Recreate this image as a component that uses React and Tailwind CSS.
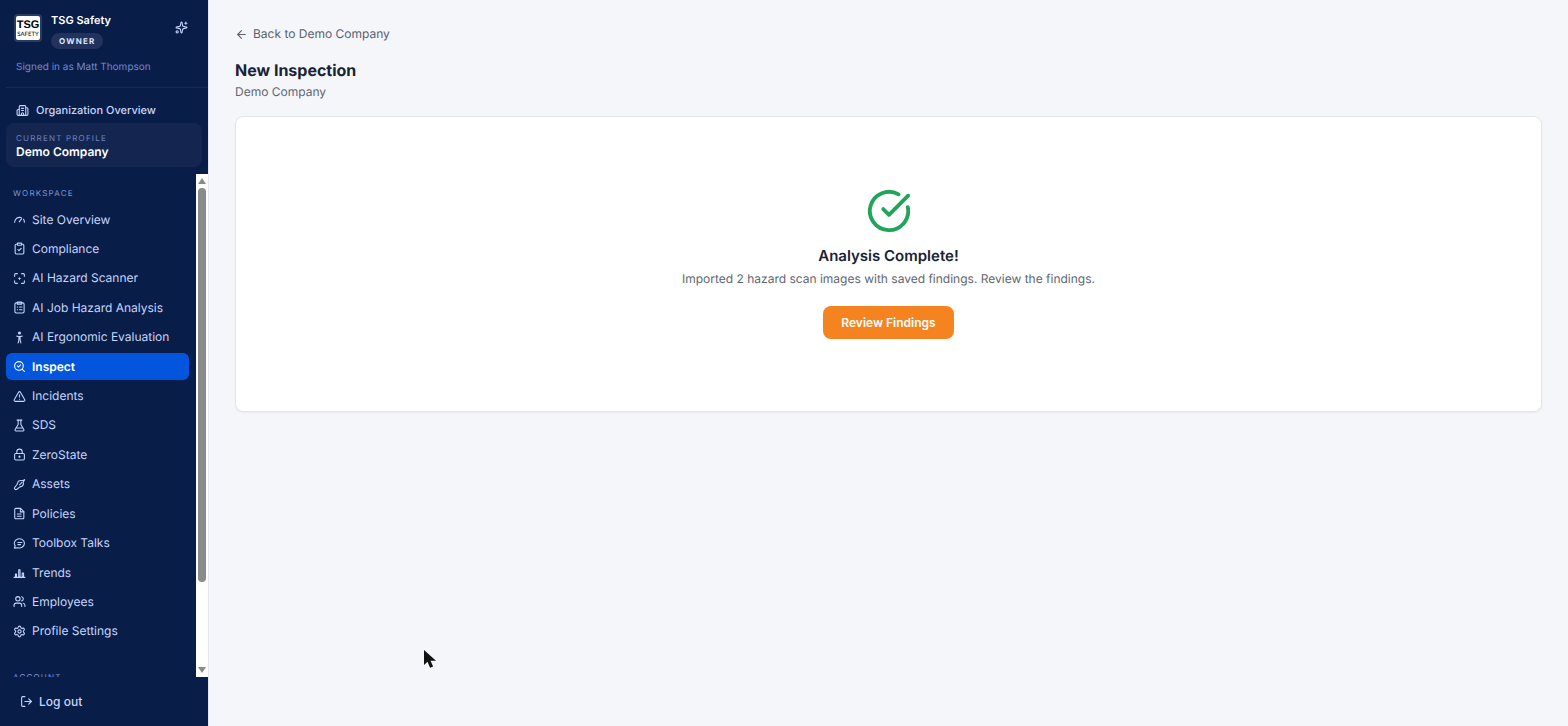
import {
  ArrowLeft,
  Building2,
  CircleCheckBig,
  ClipboardCheck,
  LockKeyhole,
  LogOut,
  SearchCheck,
  Settings,
  Sparkles,
  TriangleAlert,
  Users,
} from "lucide-react";

const Icon = ({ children }) => (
  <svg
    viewBox="0 0 24 24"
    fill="none"
    stroke="currentColor"
    strokeWidth="2"
    strokeLinecap="round"
    strokeLinejoin="round"
    className="size-[13px] shrink-0"
    aria-hidden="true"
  >
    {children}
  </svg>
);

const GaugeIcon = () => (
  <Icon>
    <path d="M3 17a9.2 9.2 0 0 1 12-8.5" />
    <path d="M19.5 11.5a9.2 9.2 0 0 1 1.5 5.5" />
    <path d="m11.5 16.5 4.5-6" />
  </Icon>
);

const ScanIcon = () => (
  <Icon>
    <path d="M3 8V5a2 2 0 0 1 2-2h3" />
    <path d="M16 3h3a2 2 0 0 1 2 2v3" />
    <path d="M21 16v3a2 2 0 0 1-2 2h-3" />
    <path d="M8 21H5a2 2 0 0 1-2-2v-3" />
    <path d="M12 10.5v3M10.5 12h3" />
  </Icon>
);

const ChecklistIcon = () => (
  <Icon>
    <rect x="3.5" y="3.5" width="17" height="18.5" rx="2.5" />
    <path d="M8 2h8v4H8z" />
    <path d="M8 11h.5M12 11h4.5M8 16h.5M12 16h4.5" />
  </Icon>
);

const PersonIcon = () => (
  <Icon>
    <circle cx="12" cy="3.8" r="1.8" fill="currentColor" />
    <path d="m7 9.5 3.5.8h3l3.5-.8" />
    <path d="M11 10.5v5L9.5 22M13 10.5v5l1.500 6.500" />
  </Icon>
);

const FlaskIcon = () => (
  <Icon>
    <path d="M7.5 2h9" />
    <path d="M9.5 2v8L4 19.5A1.7 1.7 0 0 0 5.5 22h13a1.7 1.7 0 0 0 1.5-2.5L14.5 10V2" />
    <path d="M7 16.5h10" />
  </Icon>
);

const WrenchIcon = () => (
  <Icon>
    <path d="m21.5 3-4.500 2.200c-3.200-1.200-7.500 0-8.300 3.300-.3 1.200-.5 2.500-1.400 3.500L3.500 17a2.600 2.600 0 0 0 3.700 3.700l5-3.800c1-.8 2.300-.9 3.400-1.400 3-1.400 4.300-4.500 3.200-7.500Z" />
    <path d="m12 12.5 4.5-4.5" />
  </Icon>
);

const PageIcon = () => (
  <Icon>
    <path d="M5 2.5h9l6 6V20a1.8 1.8 0 0 1-1.8 1.8H5A1.8 1.8 0 0 1 3.200 20V4.300A1.800 1.800 0 0 1 5 2.500Z" />
    <path d="M13.5 3v6H20" />
    <path d="M8 13h7M8 17h7" />
  </Icon>
);

const TalkIcon = () => (
  <Icon>
    <path d="M2.5 20.5 4 16.5a9.4 8.5 0 1 1 5 3.3Z" />
    <path d="M9 10h7.5M9 14h5" />
  </Icon>
);

const BarsIcon = () => (
  <Icon>
    <path d="M2 21h20" />
    <path d="M4.5 15h2v5h-2zM10.500 7h2.500v13h-2.500zM17 13h2.500v7H17z" />
  </Icon>
);

const links = [
  { label: "Site Overview", icon: GaugeIcon },
  { label: "Compliance", icon: ClipboardCheck },
  { label: "AI Hazard Scanner", icon: ScanIcon },
  { label: "AI Job Hazard Analysis", icon: ChecklistIcon },
  { label: "AI Ergonomic Evaluation", icon: PersonIcon },
  { label: "Inspect", icon: SearchCheck, active: true },
  { label: "Incidents", icon: TriangleAlert },
  { label: "SDS", icon: FlaskIcon },
  { label: "ZeroState", icon: LockKeyhole },
  { label: "Assets", icon: WrenchIcon },
  { label: "Policies", icon: PageIcon },
  { label: "Toolbox Talks", icon: TalkIcon },
  { label: "Trends", icon: BarsIcon },
  { label: "Employees", icon: Users },
  { label: "Profile Settings", icon: Settings },
];

const Scrollbar = () => (
  <div className="flex w-3 shrink-0 flex-col items-center bg-white py-1" aria-hidden="true">
    <svg viewBox="0 0 8 6" className="h-[6px] w-2 shrink-0">
      <path d="M4 0 8 6H0Z" fill="#8b8b8b" />
    </svg>
    <div className="flex w-2 flex-1 flex-col py-1">
      <div className="h-[83%] w-2 rounded-full bg-[#8b8b8b]" />
    </div>
    <svg viewBox="0 0 8 6" className="h-[6px] w-2 shrink-0">
      <path d="M0 0h8L4 6Z" fill="#8b8b8b" />
    </svg>
  </div>
);

const Sidebar = () => (
  <aside className="flex w-52 shrink-0 flex-col bg-[#091d49] text-[#c6d5fa]">
    <div className="ml-[6px] border-b border-[#172a58] pt-3 pr-5 pb-3 pl-2">
      <div className="flex items-start">
        <div className="mt-[2px] flex size-7 flex-col items-center justify-center rounded-sm border-2 border-[#2b3a5f] bg-white text-black">
          <span className="font-['Liberation_Sans',sans-serif] text-[11px] leading-[12px] font-bold">TSG</span>
          <span className="font-['Lato',sans-serif] text-[6px] leading-[7px]">SAFETY</span>
        </div>
        <div className="ml-[9px] flex-1">
          <p className="text-[11px] leading-4 font-semibold text-white">TSG Safety</p>
          <span className="mt-[5px] flex h-4 w-fit items-center rounded-full bg-[#22325c] px-2 text-[8px] font-bold tracking-[0.15em] text-[#dbe6ff]">
            OWNER
          </span>
        </div>
        <button type="button" aria-label="Assistant" className="mt-[9px]">
          <Sparkles className="size-[13px]" />
        </button>
      </div>
      <p className="mt-[10px] ml-[2px] text-[10px] leading-4 text-[#7089cd]">
        Signed in as Matt Thompson
      </p>
    </div>

    <a href="#" className="mt-[10px] flex h-6 items-center gap-[7px] pl-4 text-[11px] font-medium">
      <Building2 className="size-[13px]" />
      Organization Overview
    </a>
    <div className="mx-[6px] mt-px rounded-lg bg-[#14264f] px-[10px] pt-[9px] pb-[7px]">
      <p className="text-[8px] leading-3 tracking-[0.15em] text-[#6c83c2]">CURRENT PROFILE</p>
      <p className="text-[12px] leading-4 font-semibold text-white">Demo Company</p>
    </div>

    <div className="mt-[7px] flex min-h-0 flex-1">
      <nav className="min-w-0 flex-1 overflow-hidden pl-[6px]">
        <h2 className="mt-[13px] ml-[7px] text-[8px] leading-3 tracking-[0.15em] text-[#7f97d8]">
          WORKSPACE
        </h2>
        <ul className="mt-[7px] flex h-[439px] flex-col justify-between pr-[7px]">
          {links.map(({ label, icon: LinkIcon, active }) => (
            <li key={label}>
              <a
                href="#"
                className={
                  active
                    ? "flex h-[27px] items-center gap-[6px] rounded-md bg-[#0455dd] px-[7px] text-[12px] font-semibold text-white"
                    : "flex h-[27px] items-center gap-[6px] rounded-md px-[7px] text-[12px]"
                }
              >
                <LinkIcon className="size-[13px] shrink-0" />
                {label}
              </a>
            </li>
          ))}
        </ul>
        <h2 className="mt-[26px] ml-[7px] text-[8px] leading-3 tracking-[0.15em] text-[#7f97d8]">
          ACCOUNT
        </h2>
      </nav>
      <Scrollbar />
    </div>

    <button type="button" className="flex h-[49px] items-center gap-[6px] pl-5 text-[12px] font-medium">
      <LogOut className="size-[13px]" />
      Log out
    </button>
  </aside>
);

const App = () => {
  return (
    <div className="relative flex h-screen overflow-hidden bg-[#f4f6fa] font-['Inter',sans-serif] [text-rendering:geometricPrecision]">
      <Sidebar />
      <main className="min-w-0 flex-1 border-l border-[#e4e7ee] px-[26px] pt-6">
        <a href="#" className="flex h-5 items-center gap-[5px] text-[12px] text-[#5a606c]">
          <ArrowLeft className="size-[13px]" />
          Back to Demo Company
        </a>
        <h1 className="mt-[14px] text-[16px] leading-6 font-bold text-[#1a2233]">New Inspection</h1>
        <p className="mt-[2px] text-[12px] leading-4 text-[#5f6672]">Demo Company</p>

        <section className="mt-4 flex flex-col items-center rounded-lg border border-[#e2e5ec] bg-white py-[71px] shadow-xs">
          <CircleCheckBig className="size-[46px] text-[#22a45a]" />
          <h2 className="mt-[10px] text-[15px] leading-6 font-semibold text-[#1a2233]">
            Analysis Complete!
          </h2>
          <p className="mt-[3px] text-[12px] leading-4 text-[#5f6672]">
            Imported 2 hazard scan images with saved findings. Review the findings.
          </p>
          <button
            type="button"
            className="mt-[19px] mb-px h-[33px] rounded-lg bg-[#f58320] px-[18px] text-[12px] font-semibold text-white"
          >
            Review Findings
          </button>
        </section>
      </main>

      {/* pointer */}
      <svg
        viewBox="0 0 12 18"
        className="absolute top-[650px] left-[424px] h-[18px] w-3"
        aria-hidden="true"
      >
        <path d="M0 0v15l3.5-3.2 2.6 6 3-1.3-2.6-5.7H12Z" fill="#111" />
      </svg>
    </div>
  );
};

export default App;
